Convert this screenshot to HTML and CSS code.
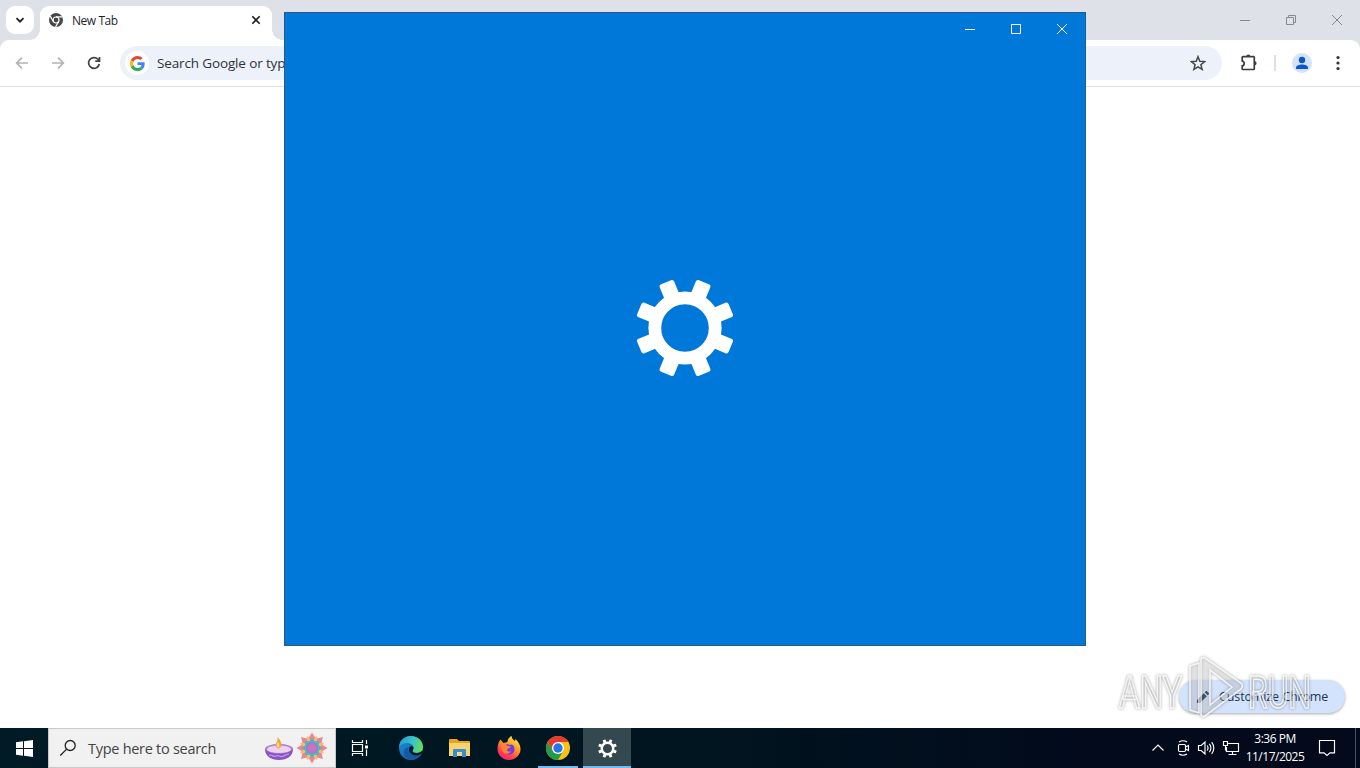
FILE: index.html
```html
<!DOCTYPE html>
<html lang="en">
<head>
<meta charset="utf-8">
<title>New Tab</title>
<link rel="stylesheet" href="styles.css">
</head>
<body>
<header class="chrome">
<div class="tabstrip">
  <button class="tab-search"><svg width="12" height="12" viewBox="0 0 12 12"><path d="M2.500 4.200 6 7.700l3.500-3.500" fill="none" stroke="#1f1f1f" stroke-width="1.800"/></svg></button>
  <div class="tab">
    <svg width="14" height="14" viewBox="0 0 14 14"><circle cx="7" cy="7" r="7" fill="#474747"/><circle cx="7" cy="7" r="3" fill="none" stroke="#fff" stroke-width="1.200"/><path d="M7 3.900h6.300M4.300 8.500 1.200 3.100M9.700 8.500 6.600 13.900" stroke="#fff" stroke-width="1.200"/></svg>
    <span class="tab-title">New Tab</span>
    <svg width="10" height="10" viewBox="0 0 10 10"><path d="m1.300 1.300 7.400 7.400m0-7.400L1.300 8.700" stroke="#1f1f1f" stroke-width="1.600"/></svg>
  </div>
  <div class="caption">
    <svg width="12" height="12" viewBox="0 0 12 12"><path d="M1 6.500h10"/></svg>
    <svg width="12" height="12" viewBox="0 0 12 12"><path d="M1.500 3.500h7v7h-7zM3.500 3V1.500h7v7H9"/></svg>
    <svg width="12" height="12" viewBox="0 0 12 12"><path d="m1 1 10 10M11 1 1 11"/></svg>
  </div>
</div>
<div class="toolbar">
  <svg class="nav off" width="16" height="16" viewBox="0 0 16 16"><path d="M14 8H3m5-5.300L2.700 8 8 13.300"/></svg>
  <svg class="nav off" width="16" height="16" viewBox="0 0 16 16"><path d="M2 8h11M8 2.700 13.300 8 8 13.300"/></svg>
  <svg class="nav" width="16" height="16" viewBox="0 0 16 16"><path d="M13.300 9A5.400 5.400 0 1 1 12 4.300l1.300 1.500M13.500 2v4.200H9.300"/></svg>
  <div class="omnibox">
    <span class="google"><svg width="15" height="15" viewBox="0 0 48 48"><path fill="#ea4335" d="M24 9.500c3.500 0 6.700 1.200 9.200 3.600l6.900-6.900C35.900 2.400 30.500 0 24 0 14.600 0 6.500 5.400 2.600 13.200l8 6.200C12.400 13.700 17.700 9.500 24 9.500z"/><path fill="#4285f4" d="M47 24.500c0-1.600-.2-3.100-.4-4.500H24v9h12.900c-.6 3-2.200 5.500-4.700 7.200l7.700 6C44.400 38 47 31.800 47 24.500z"/><path fill="#fbbc05" d="M10.500 28.600a14 14 0 0 1 0-9.200l-8-6.200a24 24 0 0 0 0 21.600z"/><path fill="#34a853" d="M24 48c6.500 0 11.900-2.100 15.900-5.800l-7.700-6c-2.200 1.500-4.900 2.300-8.200 2.300-6.300 0-11.600-4.200-13.500-9.900l-8 6.200C6.500 42.600 14.600 48 24 48z"/></svg></span>
    <span class="hint">Search Google or type a URL</span>
    <svg class="star" width="16" height="16" viewBox="0 0 16 16"><path d="m8 1.700 1.800 4.500 4.800.4-3.700 3.100 1.200 4.700L8 11.800l-4.100 2.600 1.200-4.700L1.400 6.600l4.800-.4z" fill="none" stroke="#474747" stroke-width="1.500"/></svg>
  </div>
  <svg class="ext" width="18" height="18" viewBox="0 0 18 18"><path d="M3 2.700h10.500q.8 0 .8.800v11.200q0 .8-.8.800H3q-.8 0-.8-.8v-2.900c2.600-.4 2.600-4.400 0-4.800V3.500q0-.8.8-.8z" fill="none" stroke="#3c3c3c" stroke-width="1.700"/><path d="M6.300 2.600a2 2 0 0 1 4 0zM14.600 7.200a2 2 0 0 1 0 4z" fill="#3c3c3c"/></svg>
  <span class="sep"></span>
  <svg class="avatar" width="20" height="20" viewBox="0 0 20 20"><circle cx="10" cy="10" r="10" fill="#d3e3fd"/><circle cx="10" cy="7" r="3.200" fill="#0b57d0"/><path d="M4 16v-1.300c0-2 3.300-3.200 6-3.200s6 1.200 6 3.200V16z" fill="#0b57d0"/></svg>
  <svg width="4" height="16" viewBox="0 0 4 16" fill="#333"><circle cx="2" cy="2.500" r="1.600"/><circle cx="2" cy="8" r="1.600"/><circle cx="2" cy="13.500" r="1.600"/></svg>
</div>
</header>
<main class="page">
  <button class="customize"><svg width="14" height="14" viewBox="0 0 14 14"><path d="M1 13v-3l6.800-6.800 3 3L4 13zM8.700 2.300l1.100-1.100q.6-.5 1.200 0l1.800 1.800q.5.600 0 1.200l-1.100 1.100z" fill="#0a2540"/></svg><span>Customize Chrome</span></button>
</main>
<footer class="taskbar">
  <div class="start"><svg width="17" height="17" viewBox="0 0 17 17" fill="#fff"><path d="M0 2.300 7 1.300V8H0zM8 1.200 17 0v8H8zM0 9h7v6.700L0 14.700zM8 9h9v8l-9-1.200z"/></svg></div>
  <div class="search">
    <svg width="18" height="18" viewBox="0 0 18 18" fill="none" stroke="#222" stroke-width="1.300"><circle cx="11.200" cy="6.500" r="5"/><path d="M7.600 10.100 1.300 16.500"/></svg>
    <span class="search-text">Type here to search</span>
    <svg class="diya" width="30" height="28" viewBox="0 0 30 28"><ellipse cx="15" cy="15" rx="14" ry="5" fill="#a878dc"/><path d="M1 15C1 22 7 26 15 26s14-4 14-11c-4 6-24 6-28 0z" fill="#8a52c4"/><ellipse cx="15" cy="15.300" rx="12" ry="3.800" fill="#ecd3ea"/><path d="M13.500 3c3 3 5 7 3.500 9.500-1 2.500-5 2.300-5.300-.5-.3-3 2.500-4.500 1.800-9z" fill="#f0a444"/><path d="M14 8c2 3 1.500 5 .3 5.500-2-.5-1.800-3-.3-5.500z" fill="#ffe27a"/><path d="M5 21.500c3-2 4 2 7 .5s3 1 6 .5 3-2 7-2.500" fill="none" stroke="#c7a0ea" stroke-width="1.200"/></svg>
    <svg class="rangoli" width="32" height="32" viewBox="-16 -16 32 32"><g fill="#f3c06b" transform="rotate(22.500)"><path id="p" d="M0-13 3.500-8 0 0-3.500-8z"/><use href="#p" transform="rotate(45)"/><use href="#p" transform="rotate(90)"/><use href="#p" transform="rotate(135)"/><use href="#p" transform="rotate(180)"/><use href="#p" transform="rotate(225)"/><use href="#p" transform="rotate(270)"/><use href="#p" transform="rotate(315)"/></g><g fill="#ea8791"><path id="q" d="M0-15.500 3-10.500 0-5-3-10.500z"/><use href="#q" transform="rotate(45)"/><use href="#q" transform="rotate(90)"/><use href="#q" transform="rotate(135)"/><use href="#q" transform="rotate(180)"/><use href="#q" transform="rotate(225)"/><use href="#q" transform="rotate(270)"/><use href="#q" transform="rotate(315)"/></g><path d="m0-10 2.800 3.200L7-7l-.2 4.200L10 0 6.800 2.800 7 7l-4.200-.2L0 10l-2.800-3.200L-7 7l.2-4.200L-10 0l3.200-2.800L-7-7l4.200.2z" fill="#55b4c2"/><circle r="6" fill="#8985cf"/><circle r="4.500" fill="#c274c4"/><circle r="2" fill="#dc70b4"/></svg>
  </div>
  <div class="app taskview"><svg width="18" height="18" viewBox="0 0 18 18" fill="none" stroke="#fff" stroke-width="1.200"><path d="M1.500 1v2.500h10V1M1.500 17v-2.500h10V17M1.500 5.500h10v7h-10zM15.500 1v4M15.500 10.500V17"/><path d="M14 6.500h3v3h-3z" fill="#fff" stroke="none"/></svg></div>
  <div class="app edge"><svg width="26" height="26" viewBox="0 0 26 26"><defs><linearGradient id="e1" x1="0" x2="1" y1=".3" y2=".5"><stop stop-color="#269ad9"/><stop offset=".55" stop-color="#37c5c9"/><stop offset="1" stop-color="#6bdd55"/></linearGradient><linearGradient id="e2" x1="0" x2="1" y2="1"><stop stop-color="#1b8edb"/><stop offset="1" stop-color="#0d5aa9"/></linearGradient></defs><circle cx="13" cy="13" r="12" fill="url(#e2)"/><path d="M1 12C1.600 5 6.500 1 13 1c7 0 12 5 12 11 0 4-3 6-6.500 6-2.500 0-4-1-4-2s1-1.500 1-3.400C15.500 10 12.500 8 9 8c-4 0-7 2-8 4z" fill="url(#e1)"/><path d="M10.500 12c-1.500 5 2.500 9 7 9 2.500 0 4.500-1 6-2-2 3.500-6 6-10.500 6-5-1-7.500-4.500-7.200-8 .2-2.500 2-4.500 4.700-5z" fill="#1559a4"/><path d="M14.500 16c0 1 1.500 2 4 2 2 0 4-.7 5.800-2.200q.8.200.4 1.200c-1.200 2-3.700 3.500-6.700 3.500-4 0-7-2.500-7-6 0-2 1-3.500 2.500-3.500 1.500.5 2 1 2 1.900 0 1.600-1 2.100-1 3.100z" fill="#061b26"/></svg></div>
  <div class="app"><svg width="24" height="20" viewBox="0 0 24 20"><path d="M1 2q0-1 1-1h7l2 2h10q1 0 1 1v14H1z" fill="#e5a522"/><path d="M1 5h21v13H1z" fill="#fbd26b"/><path d="M5 19v-7q0-1 1-1h11q1 0 1 1v7h-4v-3H9v3z" fill="#358ed5"/><path d="M9 14h5v4H9z" fill="#f2d888"/></svg></div>
  <div class="app"><svg width="24" height="26" viewBox="0 0 24 26"><defs><linearGradient id="ff" x1=".8" y1="0" x2=".2" y2="1"><stop stop-color="#fff044"/><stop offset=".4" stop-color="#ff9a28"/><stop offset=".75" stop-color="#ff3c50"/><stop offset="1" stop-color="#ec207a"/></linearGradient></defs><path d="M3.500 4.500 6.500 8l4-1c0-3 2-5 4-6 .5 3 2 4 3.500 5l.5-2c3 3 5 6 5 10 0 6-5 11-11.500 11S.5 20 .5 14c0-4 1-7 3-9.500z" fill="url(#ff)"/><path d="M7 11c3-2 4-2 6-1 3-1.500 4.500 1 4.500 4.500 0 3.500-2.500 5-5.500 5s-6-2-5-8.500z" fill="#793bdc"/><path d="M3.500 9c2 0 5 0 6 1.500l4 1c-.5 2-3 1.800-3.500 3-.2 2 2 2.500 4 1.700-1.500 3-6 3.300-8 .8-2-2-2.500-5-2.500-8z" fill="#ff8430"/></svg></div>
  <div class="app running"><svg width="24" height="24" viewBox="0 0 24 24"><circle cx="12" cy="12" r="12" fill="#fbc116"/><path d="M1.600 6A12 12 0 0 0 12 24l5.200-9L12 12 6.800 15z" fill="#229c4a"/><path d="M1.600 6A12 12 0 0 1 22.400 6H12L6.800 15z" fill="#e53a30"/><circle cx="12" cy="12" r="6" fill="#fff"/><circle cx="12" cy="12" r="4.700" fill="#2375e8"/></svg></div>
  <div class="app active"><svg width="19" height="19" viewBox="-50 -50 100 100"><use href="#gear"/></svg></div>
  <div class="tray">
    <svg width="14" height="10" viewBox="0 0 14 10"><path d="m1.500 7.500 5.500-5.500 5.500 5.500"/></svg>
    <svg class="meet" width="14" height="18" viewBox="0 0 14 18"><rect x="2.500" y="5.500" width="7" height="7" rx="1.200"/><path d="m9.500 8 3-1.500v5l-3-1.500M3 3Q7 .5 11 3M3 15q4 2.500 8 0"/></svg>
    <svg width="18" height="16" viewBox="0 0 18 16"><path d="M1.500 5.500h2.700L8 2v12l-3.800-3.500H1.500zM10.200 5.500q1.700 2.500 0 5M12.400 3.800q3 4.200 0 8.400M14.700 2.200q4.200 5.800 0 11.600"/></svg>
    <svg width="18" height="16" viewBox="0 0 18 16"><path d="M6 3.500h10.500v8H4.500V7M10.500 11.500v3M6.500 14.500h8M1.500 1.500h4v4h-4zM3.500 5.500v5"/></svg>
    <div class="clock"><span>3:36 PM</span><span>11/17/2025</span></div>
    <svg width="18" height="18" viewBox="0 0 18 18"><path d="M1.500 1.500h15v12.300H12l-3 2.700-3-2.700H1.500z"/></svg>
  </div>
  <div class="show-desktop"></div>
</footer>
<section class="window">
  <div class="window-bar">
    <svg width="12" height="12" viewBox="0 0 12 12"><path d="M1 6.500h10"/></svg>
    <svg width="12" height="12" viewBox="0 0 12 12"><path d="M1.500 1.500h9v9h-9z"/></svg>
    <svg width="12" height="12" viewBox="0 0 12 12"><path d="m1 1 10 10M11 1 1 11"/></svg>
  </div>
  <div class="splash"><svg width="100" height="100" viewBox="-50 -50 100 100"><g id="gear" fill="#fff"><circle r="30.200" fill="none" stroke="#fff" stroke-width="12.800"/><g id="t2"><g id="t1"><rect id="t" x="-7.800" y="-49.500" width="15.600" height="17" rx="2.500" transform="rotate(22.500)"/><use href="#t" transform="rotate(45)"/></g><use href="#t1" transform="rotate(90)"/></g><use href="#t2" transform="rotate(180)"/></g></svg></div>
</section>
<svg class="watermark" width="200" height="68" viewBox="0 0 200 68"><path fill-rule="evenodd" d="M84 4q1-2 4-1l36 25q3 3 0 6L88 61q-3 2-4-1zM93 15v35l22-18z"/><path d="M73 11l9-3v50l-9-3z"/><text x="2" y="53" textLength="63" lengthAdjust="spacingAndGlyphs">ANY</text><text x="131" y="53" textLength="63" lengthAdjust="spacingAndGlyphs">RUN</text></svg>
</body>
</html>
```
FILE: styles.css
```css
* { box-sizing: border-box; }
body { margin: 0; width: 1360px; height: 768px; overflow: hidden; display: flex; flex-direction: column; font-family: "Open Sans", "Noto Sans", sans-serif; background: #fff; position: relative; }
svg { display: block; flex: none; }
button { border: 0; padding: 0; font: inherit; }
.chrome { flex: none; background: #dee1e8; }
.tabstrip { height: 40px; display: flex; padding: 6px 0 0 6px; }
.tab-search { width: 28px; height: 28px; border-radius: 9px; background: #fff; display: flex; align-items: center; justify-content: center; margin-right: 6px; }
.tab { position: relative; width: 232px; height: 34px; border-radius: 9px 9px 0 0; background: #fff; display: flex; align-items: center; padding: 0 11px 6px 9px; }
.tab::before, .tab::after { content: ""; position: absolute; bottom: 0; width: 10px; height: 10px; }
.tab::before { left: -10px; background: radial-gradient(circle at 0 0, transparent 9.5px, #fff 10px); }
.tab::after { right: -10px; background: radial-gradient(circle at 100% 0, transparent 9.5px, #fff 10px); }
.tab-title { flex: 1; margin-left: 9px; font-size: 12px; letter-spacing: -.45px; color: #1f1f1f; }
.caption { margin-left: auto; display: flex; gap: 34px; padding: 8px 17px 0 0; fill: none; stroke: #858990; }
.toolbar { height: 47px; display: flex; align-items: center; background: #fff; border-bottom: 1px solid #dfe1e5; border-radius: 9px 9px 0 0; padding: 0 20px 0 14px; }
.nav { margin-right: 20px; fill: none; stroke: #3f4246; stroke-width: 1.7; }
.nav.off { stroke: #b0b2b5; }
.omnibox { margin-left: -2px; width: 1102px; height: 34px; border-radius: 17px; background: #edf1fa; display: flex; align-items: center; padding: 0 16px 0 5px; }
.google { width: 24px; height: 24px; border-radius: 50%; background: #fff; display: flex; align-items: center; justify-content: center; }
.hint { margin-left: 8px; font-size: 13.5px; letter-spacing: -.14px; color: #303238; flex: 1; }
.ext { margin-left: 18px; }
.sep { width: 2px; height: 16px; margin: 0 16px; background: #d9e0ed; }
.avatar { margin-right: 24px; }
.page { flex: 1; display: flex; align-items: flex-end; justify-content: flex-end; padding: 0 15px 15px 0; }
.customize { width: 166px; height: 33px; border-radius: 17px; background: #d3e3fd; box-shadow: 0 1px 3px #0005; display: flex; align-items: center; gap: 9px; padding-left: 17px; font-size: 12.5px; letter-spacing: -.12px; color: #1b3655; }
.taskbar { height: 40px; flex: none; display: flex; background: linear-gradient(90deg, #001b25, #00151f 50%, #020a1c 80%); }
.start { width: 48px; display: flex; align-items: center; justify-content: center; }
.search { width: 288px; background: #f1f1f1; border: 1px solid #c9c9c9; display: flex; align-items: center; padding: 0 7px 0 10px; }
.search-text { flex: 1; margin-left: 11px; font-size: 14.5px; letter-spacing: -.28px; color: #444; white-space: nowrap; }
.rangoli { margin-left: 2px; }
.app { width: 49px; display: flex; align-items: center; justify-content: center; }
.taskview { width: 48px; }
.edge { margin-left: 2px; }
.running { border-bottom: 2px solid #76b9ed; width: 40px; margin: 0 5px; padding-top: 2px; }
.active { width: 48px; border-bottom: 2px solid #76b9ed; background: #344850; padding-top: 2px; }
.tray { margin-left: auto; display: flex; align-items: center; padding-right: 19px; fill: none; stroke: #fff; stroke-width: 1.15; gap: 7px; }
.meet { margin-left: 4px; }
.clock { width: 60px; margin-right: 6px; margin-left: -2px; text-align: center; color: #fff; font-size: 12px; line-height: 18px; display: flex; flex-direction: column; letter-spacing: -.5px; }
.show-desktop { width: 5px; border-left: 1px solid #465062; }
.window { position: absolute; left: 284px; top: 12px; width: 802px; height: 634px; background: #0078d9; border: 1px solid #275a88; display: flex; flex-direction: column; }
.window-bar { height: 32px; display: flex; justify-content: flex-end; align-items: center; gap: 34px; padding-right: 17px; fill: none; stroke: #fff; }
.splash { flex: 1; display: flex; align-items: center; justify-content: center; padding-bottom: 34px; }
.watermark { position: absolute; left: 1117px; top: 655px; overflow: visible; filter: drop-shadow(0 0 1.5px #0007); fill: #e8e8e840; stroke: #ffffffd0; stroke-width: 1.6; font: 45px "Roboto", sans-serif; pointer-events: none; }
```
